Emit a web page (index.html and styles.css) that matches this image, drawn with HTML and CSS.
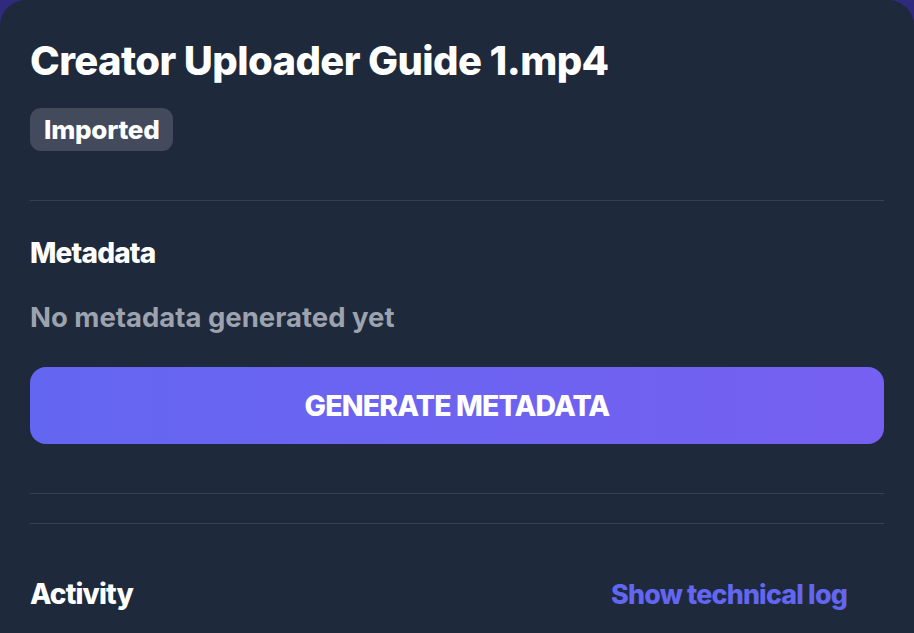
FILE: index.html
```html
<!DOCTYPE html>
<html lang="en">
<head>
<meta charset="utf-8">
<title>Creator Uploader Guide 1.mp4</title>
<link rel="stylesheet" href="styles.css">
</head>
<body>
<div class="card">
  <header class="head">
    <h1 class="title">Creator Uploader Guide 1.mp4</h1>
    <span class="badge">Imported</span>
  </header>
  <hr class="divider">
  <section class="meta">
    <h2 class="section-title">Metadata</h2>
    <p class="empty">No metadata generated yet</p>
    <button class="generate">GENERATE METADATA</button>
  </section>
  <hr class="divider divider-a">
  <hr class="divider divider-b">
  <section class="activity">
    <h2 class="section-title">Activity</h2>
    <a class="log-link" href="#">Show technical log</a>
  </section>
</div>
</body>
</html>
```
FILE: styles.css
```css
html, body {
  margin: 0;
  padding: 0;
  height: 100%;
  overflow: hidden;
}
body {
  background: #2f2a7d;
  font-family: Inter, "Noto Sans", sans-serif;
}
.card {
  background: #1e293b;
  border-radius: 26px 26px 0 0;
  height: 100%;
  padding: 0 30px;
  box-sizing: border-box;
}
.head {
  padding-top: 34px;
  display: flex;
  flex-direction: column;
  align-items: flex-start;
}
.title {
  margin: 0;
  color: #fff;
  font-size: 40px;
  font-weight: 800;
  letter-spacing: -0.015em;
  line-height: 54px;
}
.badge {
  margin-top: 20px;
  background: #424a5b;
  color: #fff;
  font-size: 26px;
  font-weight: 800;
  line-height: 43px;
  padding: 0 14px;
  border-radius: 11px;
  letter-spacing: -0.01em;
}
.divider {
  border: 0;
  height: 1px;
  background: #334155;
  margin: 0;
}
.head + .divider {
  margin-top: 49px;
}
.meta {
  padding-top: 34px;
}
.section-title {
  margin: 0;
  color: #fff;
  font-size: 28px;
  font-weight: 800;
  letter-spacing: -0.03em;
  line-height: 36px;
}
.empty {
  margin: 28px 0 0;
  color: #9ca3af;
  font-size: 27.5px;
  font-weight: 700;
  line-height: 36px;
}
.generate {
  display: block;
  margin-top: 32px;
  width: 100%;
  height: 77px;
  border: 0;
  border-radius: 16px;
  background: linear-gradient(90deg, #6366f1, #7660f1);
  color: #fff;
  font-family: inherit;
  font-size: 28.5px;
  font-weight: 800;
  letter-spacing: -0.03em;
}
.divider-a {
  margin-top: 49px;
}
.divider-b {
  margin-top: 29px;
}
.activity {
  margin-top: 52px;
  display: flex;
  justify-content: space-between;
  align-items: center;
}
.log-link {
  color: #6366f1;
  font-size: 26.8px;
  font-weight: 800;
  letter-spacing: -0.03em;
  text-decoration: none;
  margin-right: 37px;
}
```
